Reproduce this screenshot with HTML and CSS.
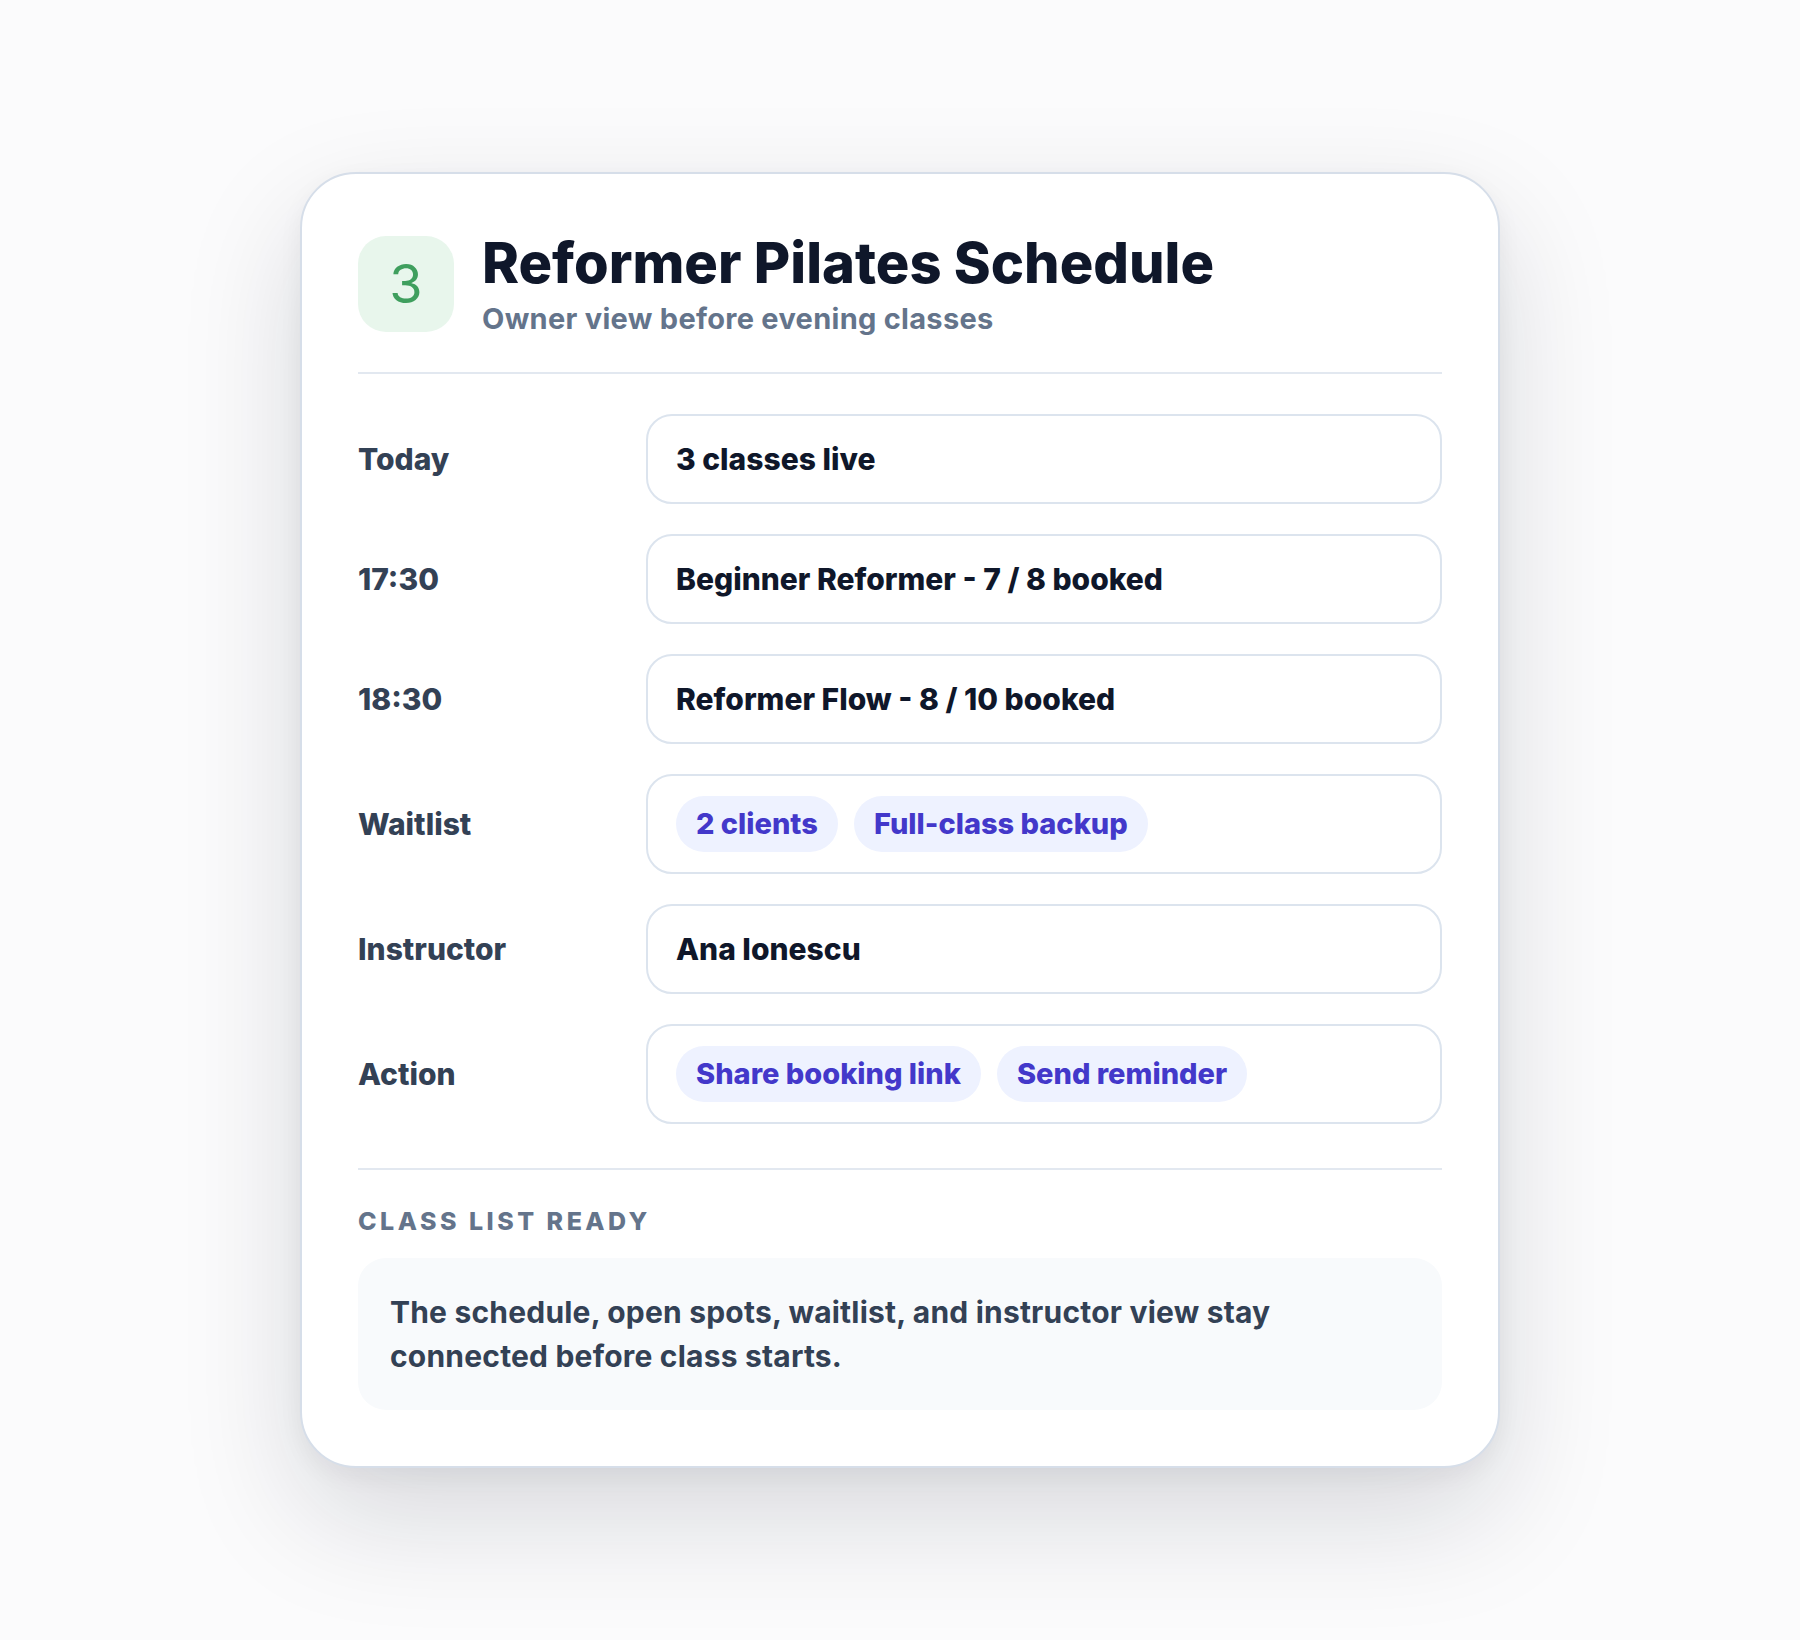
FILE: index.html
```html
<!DOCTYPE html>
<html lang="en">
<head>
  <meta charset="UTF-8" />
  <meta name="viewport" content="width=device-width, initial-scale=1.0" />
  <title>Reformer Pilates Schedule</title>
  <link rel="stylesheet" href="styles.css">
</head>
<body>
  <main class="card">
    <header class="card-head">
      <div class="step">3</div>
      <div class="head-text">
        <h1>Reformer Pilates Schedule</h1>
        <p>Owner view before evening classes</p>
      </div>
    </header>

    <dl class="rows">
      <div class="row">
        <dt>Today</dt>
        <dd>3 classes live</dd>
      </div>
      <div class="row">
        <dt>17:30</dt>
        <dd>Beginner Reformer - 7 / 8 booked</dd>
      </div>
      <div class="row">
        <dt>18:30</dt>
        <dd>Reformer Flow - 8 / 10 booked</dd>
      </div>
      <div class="row">
        <dt>Waitlist</dt>
        <dd>
          <span class="chip">2 clients</span>
          <span class="chip">Full-class backup</span>
        </dd>
      </div>
      <div class="row">
        <dt>Instructor</dt>
        <dd>Ana Ionescu</dd>
      </div>
      <div class="row">
        <dt>Action</dt>
        <dd>
          <span class="chip">Share booking link</span>
          <span class="chip">Send reminder</span>
        </dd>
      </div>
    </dl>

    <section class="summary">
      <h2>Class list ready</h2>
      <p class="note">The schedule, open spots, waitlist, and instructor view stay connected before class starts.</p>
    </section>
  </main>
</body>
</html>
```

FILE: styles.css
```css
* {
  margin: 0;
  padding: 0;
  box-sizing: border-box;
}

body {
  font-family: Inter, "Noto Sans", sans-serif;
  background: #fbfbfc;
  min-height: 100vh;
  display: flex;
  align-items: center;
  justify-content: center;
}

.card {
  width: 1200px;
  background: #fff;
  border: 2px solid #d6dee9;
  border-radius: 56px;
  padding: 56px;
  box-shadow: 0 48px 120px rgba(15, 23, 42, 0.15), 0 8px 24px rgba(15, 23, 42, 0.05);
}

/* header: step badge + title */
.card-head {
  display: flex;
  align-items: center;
  gap: 28px;
  padding-bottom: 34px;
  border-bottom: 2px solid #e2e8f0;
}

.step {
  width: 96px;
  height: 96px;
  flex-shrink: 0;
  border-radius: 28px;
  background: #e8f6ec;
  color: #3f9f5e;
  font-size: 54px;
  display: flex;
  align-items: center;
  justify-content: center;
}

.head-text h1 {
  font-size: 56px;
  font-weight: 800;
  line-height: 1.2;
  color: #0f172a;
}

.head-text p {
  margin-top: 2px;
  font-size: 29px;
  font-weight: 700;
  line-height: 1.35;
  letter-spacing: 0.01em;
  color: #64748b;
}

/* schedule rows */
.rows {
  display: flex;
  flex-direction: column;
  gap: 30px;
  margin: 40px 0 44px;
}

.row {
  display: grid;
  grid-template-columns: 260px 1fr;
  column-gap: 28px;
  align-items: center;
}

.row dt {
  font-size: 30px;
  font-weight: 800;
  color: #334155;
}

.row dd {
  min-height: 90px;
  border: 2px solid #dce4ee;
  border-radius: 26px;
  padding: 20px 28px;
  display: flex;
  align-items: center;
  gap: 16px;
  font-size: 30px;
  font-weight: 800;
  color: #0f172a;
}

.chip {
  background: #eef2ff;
  color: #4338ca;
  border-radius: 999px;
  padding: 10px 20px;
  font-size: 29px;
  line-height: 36px;
}

/* footer summary */
.summary {
  border-top: 2px solid #e2e8f0;
  padding-top: 36px;
}

.summary h2 {
  font-size: 25px;
  font-weight: 800;
  line-height: 30px;
  letter-spacing: 0.14em;
  text-transform: uppercase;
  color: #64748b;
  margin-bottom: 22px;
}

.note {
  background: #f8fafc;
  border-radius: 28px;
  padding: 32px;
  font-size: 30px;
  font-weight: 700;
  line-height: 44px;
  letter-spacing: 0.2px;
  color: #334155;
}
```
